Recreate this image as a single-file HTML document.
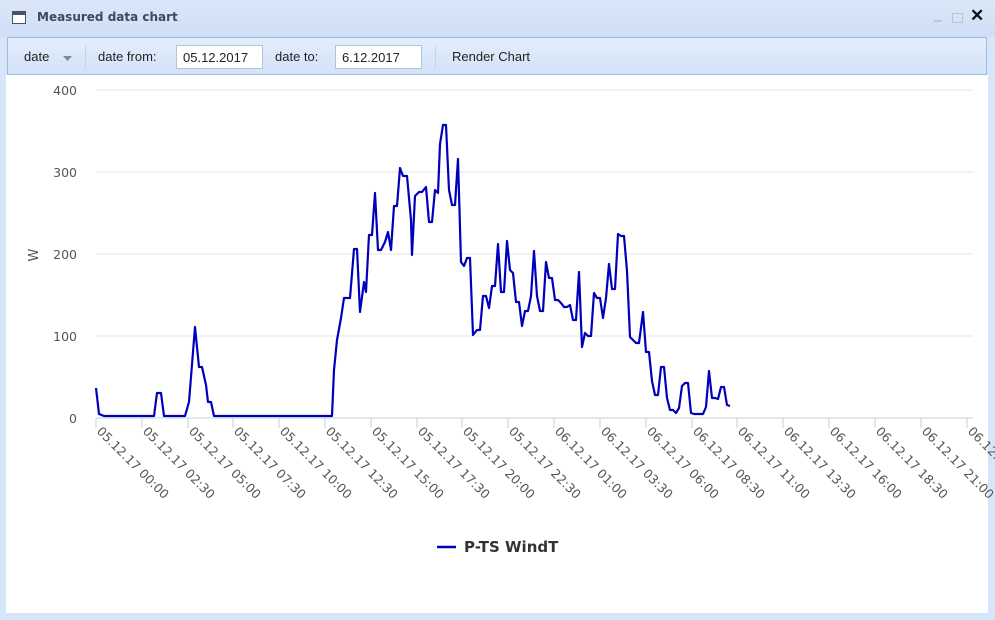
<!DOCTYPE html><html><head><style>
body{margin:0;width:995px;height:620px;overflow:hidden;background:#d7e5fa;font-family:"Liberation Sans",sans-serif;position:relative}
.title{position:absolute;left:0;top:0;width:995px;height:37px;background:linear-gradient(#dbe7f9,#cfdff6)}
.title b{position:absolute;left:37px;top:10px;font-size:12px;font-family:"DejaVu Sans",sans-serif;color:#3a4a60}
.tb{position:absolute;left:7px;top:37px;width:980px;height:38px;background:linear-gradient(#e4eefc,#d3e2f8);border:1px solid #99bbe8;box-sizing:border-box;font-size:13px;color:#222}
.tb span{position:absolute;top:11px}
.inp{position:absolute;top:7px;height:24px;background:#fff;border:1px solid #b5c5d8;box-sizing:border-box;padding:4px 6px;font-size:13px}
.sep{position:absolute;top:7px;width:1px;height:24px;background:#c4d4ea}
.main{position:absolute;left:6px;top:75px;width:982px;height:538px;background:#fff}
</style></head><body>
<div class="title">
<svg style="position:absolute;left:12px;top:11px" width="14" height="13"><rect x="0.5" y="0.5" width="13" height="12" fill="#fff" stroke="#4a5466"/><rect x="0" y="0" width="14" height="4" fill="#4a5466"/></svg>
<b>Measured data chart</b>
<div style="position:absolute;left:934px;top:20px;width:8px;height:2px;background:#bcc6d4"></div>
<div style="position:absolute;left:952px;top:13px;width:9px;height:8px;border:1px solid #bcc6d4"></div>
<div style="position:absolute;left:970px;top:6px;font-size:17px;font-weight:bold;color:#111">✕</div>
</div>
<div class="tb">
<span style="left:16px">date</span><svg style="position:absolute;left:55px;top:18px" width="9" height="5"><path d="M0 0H9L4.5 5Z" fill="#7a8aa0"/></svg>
<div class="sep" style="left:77px"></div>
<span style="left:90px">date from:</span>
<div class="inp" style="left:168px;width:87px">05.12.2017</div>
<span style="left:267px">date to:</span>
<div class="inp" style="left:327px;width:87px">6.12.2017</div>
<div class="sep" style="left:427px"></div>
<span style="left:444px">Render Chart</span>
</div>
<div class="main"></div>
<svg style="position:absolute;left:0;top:0" width="995" height="620" font-family="DejaVu Sans, sans-serif">
<g stroke="#e6e6e6"><line x1="96" x2="973" y1="90" y2="90"/><line x1="96" x2="973" y1="172" y2="172"/><line x1="96" x2="973" y1="254" y2="254"/><line x1="96" x2="973" y1="336" y2="336"/></g>
<line x1="96" x2="973" y1="418" y2="418" stroke="#c0d0e0"/>
<g font-size="12.5" fill="#555" text-anchor="end"><text x="77" y="95">400</text><text x="77" y="177">300</text><text x="77" y="259">200</text><text x="77" y="341">100</text><text x="77" y="423">0</text></g>
<text x="38" y="255" font-size="13" fill="#555" transform="rotate(-90 38 255)" text-anchor="middle">W</text>
<g font-size="12.5" fill="#555">
<text transform="translate(96,432) rotate(45)">05.12.17 00:00</text>
<text transform="translate(142,432) rotate(45)">05.12.17 02:30</text>
<text transform="translate(188,432) rotate(45)">05.12.17 05:00</text>
<text transform="translate(233,432) rotate(45)">05.12.17 07:30</text>
<text transform="translate(279,432) rotate(45)">05.12.17 10:00</text>
<text transform="translate(325,432) rotate(45)">05.12.17 12:30</text>
<text transform="translate(371,432) rotate(45)">05.12.17 15:00</text>
<text transform="translate(417,432) rotate(45)">05.12.17 17:30</text>
<text transform="translate(462,432) rotate(45)">05.12.17 20:00</text>
<text transform="translate(508,432) rotate(45)">05.12.17 22:30</text>
<text transform="translate(554,432) rotate(45)">06.12.17 01:00</text>
<text transform="translate(600,432) rotate(45)">06.12.17 03:30</text>
<text transform="translate(646,432) rotate(45)">06.12.17 06:00</text>
<text transform="translate(692,432) rotate(45)">06.12.17 08:30</text>
<text transform="translate(737,432) rotate(45)">06.12.17 11:00</text>
<text transform="translate(783,432) rotate(45)">06.12.17 13:30</text>
<text transform="translate(829,432) rotate(45)">06.12.17 16:00</text>
<text transform="translate(875,432) rotate(45)">06.12.17 18:30</text>
<text transform="translate(921,432) rotate(45)">06.12.17 21:00</text>
<text transform="translate(967,432) rotate(45)">06.12.17 23:30</text>
</g>
<g stroke="#c0d0e0"><path d="M96 418v10M142 418v10M188 418v10M233 418v10M279 418v10M325 418v10M371 418v10M417 418v10M462 418v10M508 418v10M554 418v10M600 418v10M646 418v10M692 418v10M737 418v10M783 418v10M829 418v10M875 418v10M921 418v10M967 418v10"/></g>
<polyline fill="none" stroke="#0000bb" stroke-width="2.2" stroke-linejoin="round" points="96,388 99,414 104,416 154,416 157,393 161,393 164,416 185,416 189,402 195,327 199,367 202,367 206,385 208,402 211,402 214,416 332,416 334,370 337,340 341,318 344,298 350,298 354,249 357,249 360,312 364,282 366,292 369,235 372,235 375,193 378,250 381,250 385,242 388,232 391,250 394,206 397,206 400,168 403,176 407,176 411,220 412,255 415,196 419,192 422,192 426,187 429,222 432,222 435,190 438,193 440,144 443,125 446,125 449,190 452,205 455,205 458,159 461,262 464,266 467,258 470,258 473,335 477,330 480,330 483,296 486,296 489,308 492,286 495,286 498,244 501,292 504,292 507,241 510,270 513,273 516,302 519,302 522,326 525,311 528,311 531,296 534,251 537,296 540,311 543,311 546,262 549,278 552,278 555,300 558,300 561,303 564,307 567,307 570,305 573,320 576,320 579,272 582,347 585,333 588,336 591,336 594,293 597,298 600,298 603,318 606,298 609,264 612,289 615,289 618,234 621,236 624,236 627,271 630,337 633,340 636,343 639,343 643,312 646,352 649,352 652,381 655,395 658,395 661,367 664,367 667,398 670,410 673,410 676,413 679,408 682,386 685,383 688,383 691,413 694,414 703,414 706,407 709,371 712,398 715,398 718,399 721,387 724,387 727,405 730,406"/>
<line x1="437" x2="456" y1="547" y2="547" stroke="#0000bb" stroke-width="2.5"/>
<text x="464" y="552" font-size="15" font-weight="bold" fill="#333">P-TS WindT</text>
</svg>
</body></html>
